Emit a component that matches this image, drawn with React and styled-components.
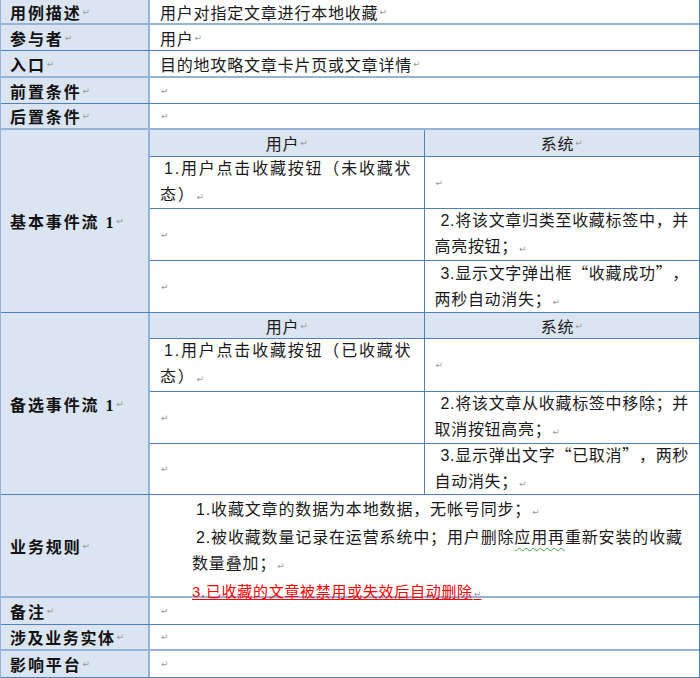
import React from 'react';
import styled, { createGlobalStyle } from 'styled-components';

const LIGHT = '#95b3d7';
const DARK = '#4f81bd';
const SHADE = '#dbe5f1';

const GlobalStyle = createGlobalStyle`
  html, body {
    margin: 0;
    padding: 0;
    background: #ffffff;
  }
  body {
    font-family: 'Liberation Sans', 'Noto Sans CJK SC', sans-serif;
    color: #1a1a1a;
  }
`;

const Table = styled.div`
  width: 700px;
  box-sizing: border-box;
  border-left: 1px solid ${LIGHT};
  border-right: 1px solid ${DARK};
`;

const Row = styled.div`
  display: grid;
  grid-template-columns: 149px 1fr;
  grid-template-rows: minmax(0, 1fr);
  box-sizing: border-box;
  height: ${(p) => p.h}px;
  border-bottom: ${(p) => (p.light ? `2px solid ${LIGHT}` : `1px solid ${DARK}`)};
`;

const Label = styled.div`
  display: flex;
  align-items: center;
  box-sizing: border-box;
  padding-left: 9px;
  background: ${SHADE};
  border-right: 2px solid ${LIGHT};
  font-family: 'Liberation Serif', 'Noto Sans CJK SC', serif;
  font-weight: 700;
  font-size: 16px;
  letter-spacing: ${(p) => p.ls ?? 1.9}px;
  color: #111;
  white-space: nowrap;
`;

const Value = styled.div`
  display: flex;
  align-items: center;
  padding-left: ${(p) => p.pad ?? 10}px;
  font-size: 16px;
  letter-spacing: ${(p) => p.ls ?? 0.8}px;
  white-space: nowrap;
`;

const Flow = styled.div`
  display: grid;
  grid-template-columns: 1fr 1fr;
  grid-template-rows: ${(p) => p.rows};
`;

const FlowHead = styled.div`
  display: flex;
  align-items: center;
  justify-content: center;
  background: ${SHADE};
  font-size: 16px;
  letter-spacing: 0.8px;
  border-bottom: 1px solid ${DARK};
  border-right: ${(p) => (p.left ? `1px solid ${DARK}` : 'none')};
`;

const FlowCell = styled.div`
  display: flex;
  align-items: center;
  box-sizing: border-box;
  padding-left: 10px;
  border-bottom: ${(p) => (p.last ? 'none' : `1px solid ${DARK}`)};
  border-right: ${(p) => (p.left ? `1px solid ${DARK}` : 'none')};
  font-size: 16px;
  letter-spacing: ${(p) => p.ls ?? 0.7}px;
  line-height: 26px;
  white-space: nowrap;
`;

const Para = styled.div`
  line-height: 26px;
`;

const Indent = styled.span`
  display: inline-block;
  width: ${(p) => p.w ?? 5}px;
`;

const Quote = styled.span`
  display: inline-block;
  width: 16px;
  text-align: ${(p) => (p.open ? 'right' : 'left')};
  font-family: 'Noto Sans CJK SC', sans-serif;
  letter-spacing: 0;
  margin-right: 0.7px;
`;

const Rules = styled.div`
  padding: 2px 0 0 42px;
  font-size: 16px;
  letter-spacing: 0.85px;
  line-height: 25.3px;
  white-space: nowrap;
`;

const RedLine = styled.div`
  color: #ff0000;
  font-size: 15px;
  letter-spacing: 0.7px;
  text-decoration: underline;
  text-decoration-color: #ff0000;
  text-underline-offset: 2px;
`;

const Wavy = styled.span`
  text-decoration: underline wavy #3aa13a;
  text-decoration-thickness: 1px;
  text-underline-offset: 4px;
`;

const Mark = styled.span`
  font-family: 'DejaVu Sans', sans-serif;
  font-size: 9px;
  font-weight: 400;
  color: #9a9a9a;
  letter-spacing: 0;
  margin-left: 1px;
`;

const P = () => <Mark>↵</Mark>;

const simpleRows = [
  { label: '用例描述', value: '用户对指定文章进行本地收藏', h: 25, light: true },
  { label: '参与者', value: '用户', h: 26 },
  { label: '入口', value: '目的地攻略文章卡片页或文章详情', h: 27, light: true },
  { label: '前置条件', value: '', h: 26 },
  { label: '后置条件', value: '', h: 26, light: true },
];

const tailRows = [
  { label: '备注', h: 27 },
  { label: '涉及业务实体', h: 26, light: true, ls: 1.6 },
  { label: '影响平台', h: 27 },
];

function EventFlow({ label, h, rows, items }) {
  return (
    <Row h={h}>
      <Label>
        {label}
        <P />
      </Label>
      <Flow rows={rows}>
        <FlowHead left>
          用户
          <P />
        </FlowHead>
        <FlowHead>
          系统
          <P />
        </FlowHead>
        {items.map((it, i) => (
          <React.Fragment key={i}>
            <FlowCell left last={i === items.length - 1} ls={1.8}>
              {it.user ? (
                <Para>
                  <Indent w={4} />
                  {it.user[0]}
                  <br />
                  {it.user[1]}
                  <P />
                </Para>
              ) : (
                <P />
              )}
            </FlowCell>
            <FlowCell last={i === items.length - 1}>
              {it.sys ? (
                <Para>
                  <Indent w={6} />
                  {it.sys[0]}
                  <br />
                  {it.sys[1]}
                  <P />
                </Para>
              ) : (
                <P />
              )}
            </FlowCell>
          </React.Fragment>
        ))}
      </Flow>
    </Row>
  );
}

export default function App() {
  return (
    <>
      <GlobalStyle />
      <Table>
        {simpleRows.map((r) => (
          <Row key={r.label} h={r.h} light={r.light}>
            <Label>
              {r.label}
              <P />
            </Label>
            <Value>
              {r.value}
              <P />
            </Value>
          </Row>
        ))}

        <EventFlow
          label="基本事件流 1"
          h={183}
          rows="27px 52px 52px 51px"
          items={[
            { user: ['1.用户点击收藏按钮（未收藏状', '态）'] },
            { sys: ['2.将该文章归类至收藏标签中，并', '高亮按钮；'] },
            {
              sys: [
                <>
                  3.显示文字弹出框<Quote open>“</Quote>收藏成功<Quote>”</Quote>，
                </>,
                '两秒自动消失；',
              ],
            },
          ]}
        />

        <EventFlow
          label="备选事件流 1"
          h={182}
          rows="26px 53px 52px 50px"
          items={[
            { user: ['1.用户点击收藏按钮（已收藏状', '态）'] },
            { sys: ['2.将该文章从收藏标签中移除；并', '取消按钮高亮；'] },
            {
              sys: [
                <>
                  3.显示弹出文字<Quote open>“</Quote>已取消<Quote>”</Quote>，两秒
                </>,
                '自动消失；',
              ],
            },
          ]}
        />

        <Row h={103} light>
          <Label>
            业务规则
            <P />
          </Label>
          <Rules>
            <div>
              <Indent w={4} />
              1.收藏文章的数据为本地数据，无帐号同步；
              <P />
            </div>
            <div>
              <Indent w={4} />
              2.被收藏数量记录在运营系统中；用户删除<Wavy>应用再</Wavy>重新安装的收藏
            </div>
            <div>
              数量叠加；
              <P />
            </div>
            <RedLine>
              3.已收藏的文章被禁用或失效后自动删除
              <P />
            </RedLine>
          </Rules>
        </Row>

        {tailRows.map((r) => (
          <Row key={r.label} h={r.h} light={r.light}>
            <Label ls={r.ls}>
              {r.label}
              <P />
            </Label>
            <Value>
              <P />
            </Value>
          </Row>
        ))}
      </Table>
    </>
  );
}
